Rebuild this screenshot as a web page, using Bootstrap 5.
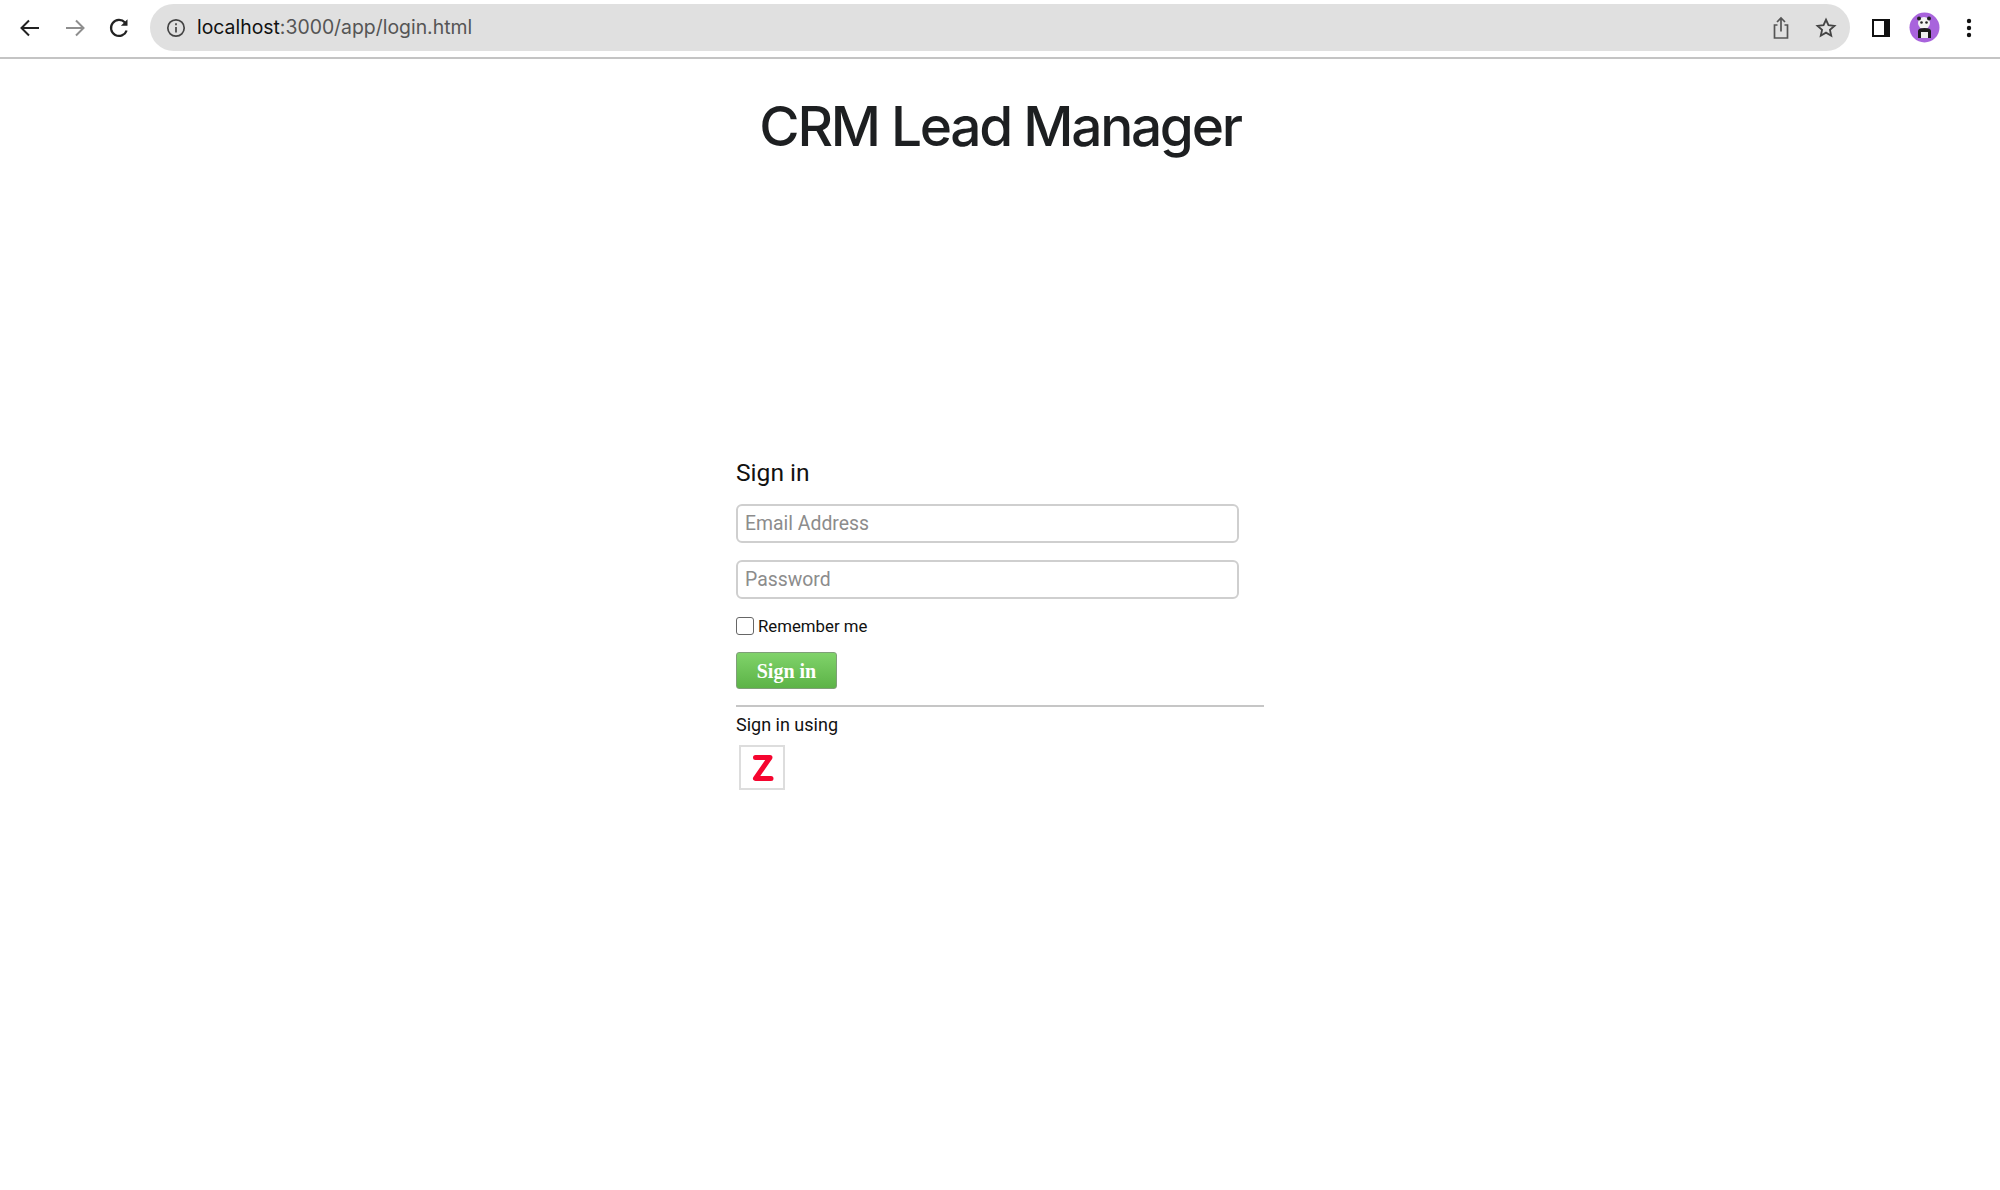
<!DOCTYPE html>
<html lang="en">
<head>
<meta charset="utf-8">
<title>CRM Lead Manager</title>
<link href="https://cdn.jsdelivr.net/npm/bootstrap@5.3.0/dist/css/bootstrap.min.css" rel="stylesheet">
<style>
html,body{height:100%;background:#fff;overflow:hidden}
body{font-family:Roboto,"Liberation Sans",sans-serif;color:#111}
.chrome-bar{height:59px;border-bottom:2px solid #c4c4c4;padding:4px 0 0 0;background:#fff}
.nav-ico{width:24px;height:24px;display:block}
.nav-slot{width:44.5px;height:47px;display:flex;align-items:center;justify-content:center}
.nav-group{padding-left:8px;width:150px}
.omni{width:1700px;height:47px;background:#e0e0e0;border-radius:24px;padding:0 16px 0 16px}
.omni-url{font-family:Inter,"Liberation Sans",sans-serif;font-size:19.4px;color:#555;margin-left:11px;padding-top:1px}
.omni-url b{font-weight:400;color:#111}
.omni-end{gap:25px;margin-right:-3px;margin-top:1px}
.end-group{width:150px;padding-left:21px;height:47px}
.avatar-ico{margin-left:18px}
.dots-ico{margin-left:25px}
.app-title{font-family:Inter,"Liberation Sans",sans-serif;font-size:55px;font-weight:500;color:#1d1f21;letter-spacing:-2.3px;line-height:67px;margin:34px 0 0 0;text-align:center}
.login-wrap{width:528px;margin:298px auto 0}
.login-head{font-size:24.6px;font-weight:400;line-height:30px;margin:0 0 16px 0;color:#111}
.login-input{width:503px;height:39px;border:2px solid #cfcfcf;border-radius:6px;padding:0 7px;font-size:19.4px;font-family:Roboto,sans-serif;margin-bottom:17px;box-shadow:none;color:#111;display:block}
.login-input::placeholder{color:#8c8c8c;opacity:1}
.remember{display:flex;align-items:center;height:20px;font-size:16.8px;line-height:20px;margin-bottom:16px;color:#111}
.remember input{width:18px;height:18px;margin:0 4px 0 0;border:1.5px solid #666;border-radius:3px;appearance:none;background:#fff;display:block}
.go-btn{width:101px;height:37px;padding:0;border:1.5px solid #7f9f78;border-radius:3px;background:linear-gradient(#80d36a,#5cb347);color:#fff;font-family:"Liberation Serif",serif;font-weight:700;font-size:20px;line-height:32px;display:block}
.split{border:0;border-top:2px solid #c6c6c6;opacity:1;margin:16px 0 8px;width:528px}
.using{font-size:18px;line-height:20px;color:#111;margin-bottom:10px}
.z-box{width:46px;height:45px;margin-left:3px;border:2px solid #ddd;display:flex;align-items:center;justify-content:center;background:#fff}
.z-mark{margin-left:2px}
</style>
</head>
<body>
<div class="chrome-bar d-flex align-items-start">
  <div class="nav-group d-flex">
    <div class="nav-slot"><svg class="nav-ico" viewBox="0 0 24 24" fill="none" stroke="#222" stroke-width="2"><path d="M21 12H3.5M11 4.5 3.5 12l7.5 7.5"/></svg></div>
    <div class="nav-slot"><svg class="nav-ico" viewBox="0 0 24 24" fill="none" stroke="#8e8e8e" stroke-width="2"><path d="M3 12h17.5M13 4.5l7.5 7.5-7.5 7.5"/></svg></div>
    <div class="nav-slot"><svg class="nav-ico" viewBox="0 0 24 24" fill="none" stroke="#222" stroke-width="2.2"><path d="M19.6 14.5A8 8 0 1 1 18 6.6"/><path d="M20.5 3.2v6.6h-6.6z" fill="#222" stroke="none"/></svg></div>
  </div>
  <div class="omni d-flex align-items-center">
    <svg width="20" height="20" viewBox="0 0 20 20" fill="none" stroke="#444" stroke-width="1.7"><circle cx="10" cy="10" r="8.2"/><path d="M10 9v5.5M10 5.2v2"/></svg>
    <span class="omni-url"><b>localhost</b>:3000/app/login.html</span>
    <div class="ms-auto d-flex align-items-center omni-end">
      <svg width="18" height="24" viewBox="0 0 18 24" fill="none" stroke="#555" stroke-width="1.7"><path d="M5.5 9H2.5v13h13V9h-3M9 15.5V2.5M5 6l4-4 4 4"/></svg>
      <svg width="22" height="22" viewBox="0 0 24 24" fill="none" stroke="#444" stroke-width="2"><path d="m12 3 2.7 6 6.5.7-4.9 4.3 1.4 6.4-5.7-3.3-5.7 3.3 1.4-6.4-4.9-4.3 6.5-.7z"/></svg>
    </div>
  </div>
  <div class="end-group d-flex align-items-center">
    <svg width="20" height="20" viewBox="0 0 20 20" class="flex-shrink-0"><rect x="1" y="1" width="18" height="18" fill="#111"/><rect x="3" y="3" width="10" height="14" fill="#fff"/></svg>
    <svg width="31" height="31" viewBox="0 0 31 31" class="flex-shrink-0 avatar-ico"><circle cx="15.5" cy="15.5" r="15" fill="#a863dc"/><circle cx="15" cy="11" r="6" fill="#f2f2f2"/><circle cx="10" cy="6.5" r="2" fill="#222"/><circle cx="20" cy="6.5" r="2" fill="#222"/><circle cx="12.5" cy="10.5" r="1.3" fill="#222"/><circle cx="17.5" cy="10.5" r="1.3" fill="#222"/><path d="M9 26v-7q0-3 6.5-3t6.5 3v7h-3v-6h-7v6z" fill="#1b1b1b"/><rect x="12" y="20" width="7" height="6" fill="#eee"/></svg>
    <svg width="8" height="20" viewBox="0 0 8 20" class="flex-shrink-0 dots-ico" fill="#111"><circle cx="4" cy="3" r="2.2"/><circle cx="4" cy="10" r="2.2"/><circle cx="4" cy="17" r="2.2"/></svg>
  </div>
</div>

<h1 class="app-title">CRM Lead Manager</h1>

<form class="login-wrap">
  <h2 class="login-head">Sign in</h2>
  <input class="form-control login-input" type="text" placeholder="Email Address">
  <input class="form-control login-input" type="password" placeholder="Password">
  <label class="remember"><input type="checkbox">Remember me</label>
  <button type="button" class="btn go-btn">Sign in</button>
  <hr class="split">
  <div class="using">Sign in using</div>
  <div class="z-box"><svg class="z-mark" width="22" height="28" viewBox="0 0 22 28" fill="none" stroke="#f5052f" stroke-width="5" stroke-linejoin="round" stroke-linecap="round"><path d="M3.5 3.5H18L3.5 24.5H19"/></svg></div>
</form>
<script src="https://cdn.jsdelivr.net/npm/bootstrap@5.3.0/dist/js/bootstrap.bundle.min.js"></script>
</body>
</html>
